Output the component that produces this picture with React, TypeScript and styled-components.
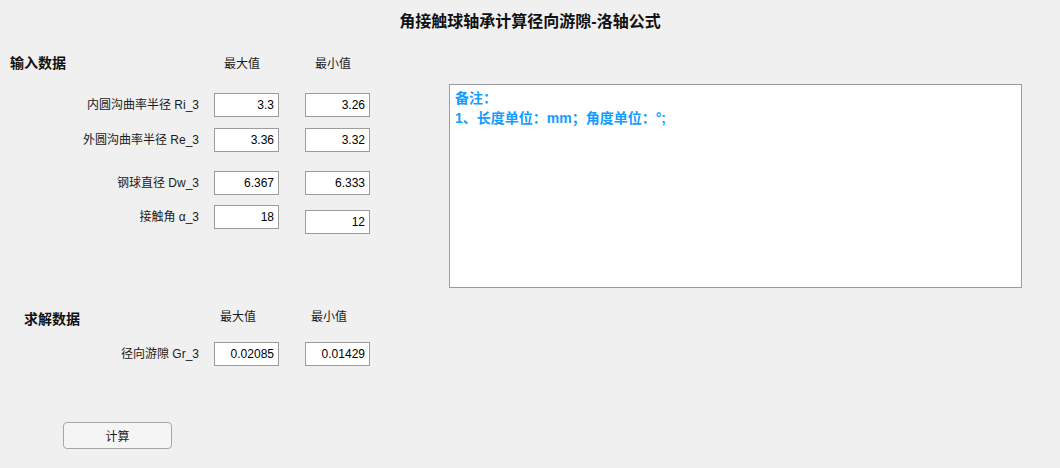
import React from "react";
import styled, { createGlobalStyle } from "styled-components";

const Global = createGlobalStyle`
  html, body {
    margin: 0;
    padding: 0;
    background: #f0f0f0;
  }
  body {
    font-family: "Liberation Sans", "Noto Sans CJK SC", sans-serif;
    color: #1a1a1a;
  }
`;

const Page = styled.div`
  width: 1060px;
  height: 468px;
  background: #f0f0f0;
  display: flex;
  flex-direction: column;
  overflow: hidden;
`;

const Title = styled.h1`
  margin: 0;
  height: 42px;
  box-sizing: border-box;
  padding-top: 12px;
  font-size: 16px;
  line-height: 20px;
  font-weight: bold;
  text-align: center;
  color: #111;
`;

const Body = styled.div`
  display: flex;
  flex-direction: row;
`;

const LeftPane = styled.div`
  width: 449px;
  display: flex;
  flex-direction: column;
`;

const Header = styled.div<{ $top?: number }>`
  display: flex;
  align-items: center;
  height: 40px;
  margin-top: ${(p) => p.$top ?? 0}px;
`;

const SectionTitle = styled.div<{ $lead: number; $indent: number }>`
  box-sizing: border-box;
  width: ${(p) => p.$lead}px;
  padding-left: ${(p) => p.$indent}px;
  font-size: 14px;
  font-weight: bold;
  color: #111;
`;

const ColHead = styled.div<{ $lift?: number }>`
  width: 91px;
  font-size: 12px;
  color: #1a1a1a;
  position: relative;
  top: ${(p) => -(p.$lift ?? 0)}px;
`;

const Row = styled.div<{ $top: number }>`
  display: flex;
  align-items: flex-start;
  margin-top: ${(p) => p.$top}px;
`;

const Label = styled.div`
  width: 199px;
  height: 24px;
  line-height: 24px;
  text-align: right;
  font-size: 12px;
  color: #1a1a1a;
  white-space: nowrap;
`;

const Field = styled.input<{ $gap: number; $drop?: number }>`
  box-sizing: border-box;
  width: 65px;
  height: 24px;
  margin: ${(p) => p.$drop ?? 0}px 0 0 ${(p) => p.$gap}px;
  padding: 0 4px 0 2px;
  border: 1px solid #9c9c9c;
  background: #ffffff;
  text-align: right;
  font-family: "Liberation Sans", sans-serif;
  font-size: 12px;
  color: #000;
  outline: none;
`;

const Button = styled.button`
  box-sizing: border-box;
  width: 109px;
  height: 27px;
  margin: 56px 0 0 63px;
  border: 1px solid #a6a6a6;
  border-radius: 4px;
  background: #f5f5f5;
  font-family: "Liberation Sans", "Noto Sans CJK SC", sans-serif;
  font-size: 12px;
  color: #1a1a1a;
  padding: 0;
`;

const Notes = styled.div`
  box-sizing: border-box;
  width: 573px;
  height: 204px;
  margin-top: 42px;
  border: 1px solid #9c9c9c;
  background: #ffffff;
  padding: 3px 5px;
  color: #149cff;
  font-size: 14px;
  font-weight: bold;
  line-height: 20px;
`;

const NoteLine = styled.div`
  white-space: nowrap;
`;

type Pair = { label: string; max: string; min: string; top: number; drop?: number };

const inputs: Pair[] = [
  { label: "内圆沟曲率半径 Ri_3", max: "3.3", min: "3.26", top: 11 },
  { label: "外圆沟曲率半径 Re_3", max: "3.36", min: "3.32", top: 11 },
  { label: "钢球直径 Dw_3", max: "6.367", min: "6.333", top: 19 },
  { label: "接触角 α_3", max: "18", min: "12", top: 10, drop: 5 },
];

export default function App() {
  return (
    <Page>
      <Global />
      <Title>角接触球轴承计算径向游隙-洛轴公式</Title>
      <Body>
        <LeftPane>
          <Header>
            <SectionTitle $lead={224} $indent={10}>输入数据</SectionTitle>
            <ColHead>最大值</ColHead>
            <ColHead>最小值</ColHead>
          </Header>
          {inputs.map((r) => (
            <Row key={r.label} $top={r.top}>
              <Label>{r.label}</Label>
              <Field $gap={15} readOnly value={r.max} />
              <Field $gap={26} $drop={r.drop} readOnly value={r.min} />
            </Row>
          ))}
          <Header $top={64}>
            <SectionTitle $lead={220} $indent={24}>求解数据</SectionTitle>
            <ColHead $lift={3}>最大值</ColHead>
            <ColHead $lift={3}>最小值</ColHead>
          </Header>
          <Row $top={4}>
            <Label>径向游隙 Gr_3</Label>
            <Field $gap={15} readOnly value="0.02085" />
            <Field $gap={26} readOnly value="0.01429" />
          </Row>
          <div>
            <Button type="button">计算</Button>
          </div>
        </LeftPane>
        <Notes>
          <NoteLine>备注：</NoteLine>
          <NoteLine>1、长度单位：mm；角度单位：°;</NoteLine>
        </Notes>
      </Body>
    </Page>
  );
}
